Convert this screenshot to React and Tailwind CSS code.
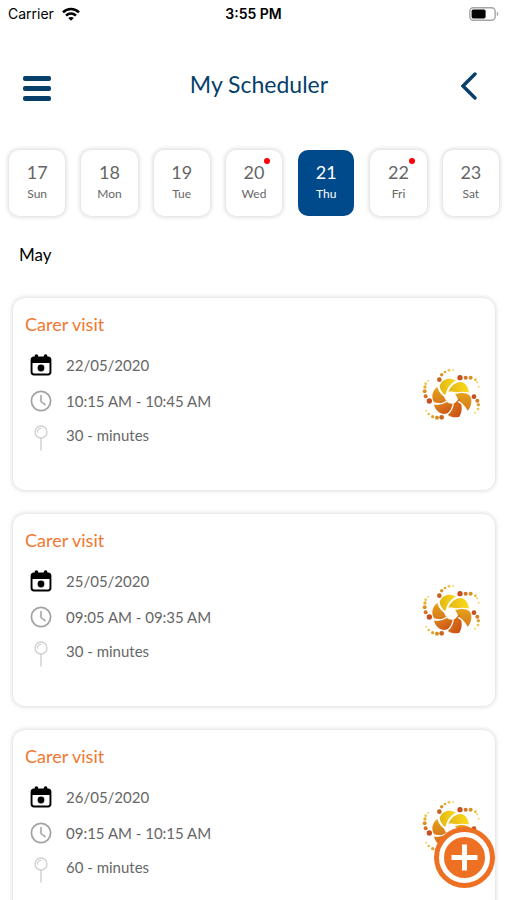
import { useState } from "react";

const DAYS = [
  { date: 17, day: "Sun" },
  { date: 18, day: "Mon" },
  { date: 19, day: "Tue" },
  { date: 20, day: "Wed", hasVisit: true },
  { date: 21, day: "Thu" },
  { date: 22, day: "Fri", hasVisit: true },
  { date: 23, day: "Sat" },
];

const VISITS = [
  { id: 1, title: "Carer visit", date: "22/05/2020", time: "10:15 AM - 10:45 AM", duration: "30 - minutes" },
  { id: 2, title: "Carer visit", date: "25/05/2020", time: "09:05 AM - 09:35 AM", duration: "30 - minutes" },
  { id: 3, title: "Carer visit", date: "26/05/2020", time: "09:15 AM - 10:15 AM", duration: "60 - minutes" },
];

// x, y, radius, colour
const LOGO_DOTS = [
  [90, 74, 7, "#c9621b"], [97, 59, 5, "#dd8f22"], [107, 51, 4, "#e5ab2c"], [119, 46, 4, "#ecc63f"], [132, 45, 3, "#f0d766"],
  [152, 68, 8, "#c9501b"], [169, 68, 6, "#d5741f"], [184, 68, 6, "#dd9024"], [198, 74, 4, "#e8bb35"], [203, 82, 3, "#efd25a"], [208, 95, 3, "#f0d75e"],
  [194, 125, 7, "#c9501b"], [204, 137, 6, "#d97b20"], [207, 149, 5, "#e2a02a"], [206, 162, 4, "#ecc440"], [197, 173, 3, "#f0d75e"],
  [97, 187, 7, "#c9621b"], [83, 188, 6, "#da8a22"], [70, 185, 5, "#e2a42b"], [58, 177, 4, "#ebc23c"], [50, 167, 3, "#f0d75e"],
  [60, 138, 8, "#c9501b"], [49, 124, 6, "#d5701f"], [46, 109, 6, "#dd9024"], [47, 96, 5, "#e5af2f"], [49, 86, 4, "#ecc440"], [56, 77, 3, "#f0d75e"],
];

function WifiIcon() {
  return (
    <svg viewBox="0 0 18 14" className="h-[14px] w-[18px]" fill="none" stroke="#000" strokeWidth="2.6">
      <path d="M1 5.4C5.6 .9 12.4 .9 17 5.4" />
      <path d="M4 8.6c3-2.7 7-2.7 10 0" />
      <path d="M9 13.8 6.2 11c1.6-1.5 4-1.5 5.6 0z" fill="#000" stroke="none" />
    </svg>
  );
}

function BatteryIcon() {
  return (
    <svg viewBox="0 0 30 14" className="h-[14px] w-[30px]">
      <rect x="0.8" y="0.8" width="25.4" height="12.4" rx="3.6" fill="#fff" stroke="#a6a6a6" strokeWidth="1.4" />
      <rect x="2.6" y="2.6" width="14" height="8.8" rx="1.6" fill="#000" />
      <path d="M27.8 4.8c2 .6 2 3.8 0 4.4z" fill="#a6a6a6" />
    </svg>
  );
}

function CalendarIcon() {
  return (
    <svg viewBox="0 0 22 22" className="h-[22px] w-[22px]">
      <path
        fillRule="evenodd"
        d="M4 2.5h.6V2a1.8 1.8 0 0 1 3.6 0v.5h5.6V2a1.8 1.8 0 0 1 3.6 0v.5H18A3.4 3.4 0 0 1 21.4 6v12A3.4 3.4 0 0 1 18 21.4H4A3.4 3.4 0 0 1 .6 18V6A3.4 3.4 0 0 1 4 2.5zM2.5 9v8.8A1.7 1.7 0 0 0 4.2 19.5h13.6a1.7 1.7 0 0 0 1.7-1.7V9z"
      />
      <circle cx="11" cy="14" r="3.4" />
    </svg>
  );
}

function ClockIcon() {
  return (
    <svg viewBox="0 0 22 22" className="h-[22px] w-[22px]" fill="none" stroke="#a3a3a3" strokeLinecap="round">
      <circle cx="11" cy="11" r="9.6" strokeWidth="1.8" />
      <path d="M11 5.5v6l4 3.2" strokeWidth="1.5" />
    </svg>
  );
}

function PinIcon() {
  return (
    <svg viewBox="0 0 14 26" className="h-[26px] w-[14px]" fill="none" stroke="#cfcfcf" strokeLinecap="round">
      <circle cx="7" cy="7" r="6" strokeWidth="1.3" />
      <path d="M3.4 7.4A4 4 0 0 1 7 3.3" strokeWidth="1.2" />
      <path d="M7 13v12" strokeWidth="1.4" />
    </svg>
  );
}

function CompanyLogo() {
  return (
    <svg viewBox="38 39 177 159" className="h-[53px] w-[59px] shrink-0">
      <defs>
        <linearGradient id="petalTop" x1="0" y1="0" x2="1" y2="0">
          <stop offset="0" stopColor="#e6b414" />
          <stop offset="1" stopColor="#f9dc1c" />
        </linearGradient>
        <linearGradient id="petalSide" x1="0" y1="0" x2="0" y2="1">
          <stop offset="0" stopColor="#e3a21b" />
          <stop offset="1" stopColor="#d9781c" />
        </linearGradient>
        <linearGradient id="petalBottom" x1="0" y1="0" x2="1" y2="1">
          <stop offset="0" stopColor="#e08a22" />
          <stop offset="1" stopColor="#c8480f" />
        </linearGradient>
      </defs>
      <path fill="url(#petalTop)" d="M91 93C96 78 107 71 121 71C129 71 136 74 140 77C126 85 115 97 112 112L107 120C98 113 92 103 91 93z" />
      <path fill="url(#petalTop)" d="M117 110C124 93 138 82 154 81C168 82 177 95 179 113C166 110 154 111 143 114C134 110 125 109 117 110z" />
      <path fill="url(#petalSide)" d="M137 117C154 111 173 112 182 123C189 134 188 152 175 168C168 157 158 148 148 143C147 133 143 124 137 117z" />
      <path fill="url(#petalBottom)" d="M149 130C160 150 159 172 150 185C138 189 124 186 114 179C122 171 128 160 131 148C139 143 145 137 149 130z" />
      <path fill="url(#petalBottom)" d="M74 148C86 150 99 147 110 141C120 147 131 147 142 144C135 164 120 177 103 177C88 175 77 164 74 148z" />
      <path fill="url(#petalSide)" d="M84 96C88 108 95 117 104 124C106 132 111 138 118 142C103 147 87 146 75 142C65 130 67 108 84 96z" />
      <path
        fill="none"
        stroke="#fff"
        strokeWidth="4"
        d="M139 80C125 87 115 100 112 118M180 116C166 111 150 111 135 116M174 170C168 156 158 146 147 139M112 180C123 172 130 160 132 145M72 146C87 149 101 147 114 138M86 94C89 107 97 118 108 125"
      />
      {LOGO_DOTS.map(([cx, cy, r, fill]) => (
        <circle key={`${cx}-${cy}`} cx={cx} cy={cy} r={r} fill={fill} />
      ))}
    </svg>
  );
}

function StatusBar() {
  return (
    <div className="grid grid-cols-3 items-center px-2 pt-1 font-['Inter','Liberation_Sans',sans-serif] text-sm text-black">
      <div className="flex items-center gap-2">
        <span>Carrier</span>
        <WifiIcon />
      </div>
      <span className="text-center font-semibold">3:55 PM</span>
      <div className="flex justify-end">
        <BatteryIcon />
      </div>
    </div>
  );
}

function DayButton({ item, selected, onSelect }) {
  return (
    <button
      type="button"
      aria-pressed={selected}
      onClick={onSelect}
      className={`relative flex h-[66px] flex-col items-center rounded-[10px] pt-2 ${
        selected ? "bg-[#004a8b] text-white" : "bg-white text-[#666666] shadow-[0_0_4px_1px_#d9d9d9]"
      }`}
    >
      <span className="text-lg leading-7">{item.date}</span>
      <span className="text-xs leading-4">{item.day}</span>
      {item.hasVisit && <span className="absolute top-2 right-3 h-1.5 w-1.5 rounded-full bg-[#fb0007]" />}
    </button>
  );
}

function VisitCard({ visit }) {
  return (
    <li className="flex h-48 items-center justify-between rounded-xl bg-white pr-3.5 pl-3 shadow-[0_0_4px_1px_#dcdcdc]">
      <div className="flex h-full flex-col pt-3">
        <h3 className="text-lg leading-7 text-[#f07830]">{visit.title}</h3>
        <div className="mt-[11px] flex h-8 items-center gap-3.5 pl-[5px]">
          <CalendarIcon />
          <span>{visit.date}</span>
        </div>
        <div className="mt-1 flex h-8 items-center gap-3.5 pl-[5px]">
          <ClockIcon />
          <span>{visit.time}</span>
        </div>
        <div className="mt-1.5 flex items-start gap-3.5 pl-[5px]">
          <span className="flex w-[22px] justify-center pt-0.5">
            <PinIcon />
          </span>
          <span>{visit.duration}</span>
        </div>
      </div>
      <CompanyLogo />
    </li>
  );
}

export default function App() {
  const [selectedDate, setSelectedDate] = useState(21);

  return (
    <div className="relative flex h-screen flex-col overflow-hidden bg-white font-['Lato','Open_Sans',sans-serif] text-[15px] leading-6 text-[#666666]">
      <StatusBar />

      <header className="mt-8 grid h-14 grid-cols-[28px_1fr_28px] items-center pr-6 pl-[23px] text-[#073f6b]">
        <button type="button" aria-label="Menu" className="flex flex-col gap-[5px] pt-2">
          <span className="h-[5px] w-full rounded-xs bg-[#073f6b]" />
          <span className="h-[5px] w-full rounded-xs bg-[#073f6b]" />
          <span className="h-[5px] w-full rounded-xs bg-[#073f6b]" />
        </button>
        <h1 className="pl-3 text-center text-[23px] leading-8">My Scheduler</h1>
        <button type="button" aria-label="Back" className="flex justify-center pt-1">
          <svg viewBox="0 0 16 28" className="h-7 w-4" fill="none" stroke="currentColor" strokeWidth="3.4" strokeLinecap="round">
            <path d="M14 2 2 14l12 12" />
          </svg>
        </button>
      </header>

      <nav aria-label="Days" className="mt-[38px] grid grid-cols-7 gap-4 pr-2 pl-[9px]">
        {DAYS.map((item) => (
          <DayButton
            key={item.date}
            item={item}
            selected={item.date === selectedDate}
            onSelect={() => setSelectedDate(item.date)}
          />
        ))}
      </nav>

      <h2 className="mt-[25px] px-[19px] text-[17px] leading-7 text-black">May</h2>

      <main className="mt-5 min-h-0 flex-1 overflow-y-auto pt-2 pr-3 pl-[13px] [scrollbar-width:none]">
        <ul className="flex flex-col gap-6 pt-px pb-6">
          {VISITS.map((visit) => (
            <VisitCard key={visit.id} visit={visit} />
          ))}
        </ul>
      </main>

      <button type="button" aria-label="Add visit" className="absolute right-3 bottom-3 h-[61px] w-[61px]">
        <svg viewBox="0 0 61 61" className="h-full w-full">
          <circle cx="30.5" cy="30.5" r="30.5" fill="#ee7023" />
          <circle cx="30.5" cy="30.5" r="23" fill="none" stroke="#fff" strokeWidth="5" />
          <path d="M30.5 17.5v26M17.5 30.5h26" stroke="#fff" strokeWidth="5" />
        </svg>
      </button>
    </div>
  );
}
